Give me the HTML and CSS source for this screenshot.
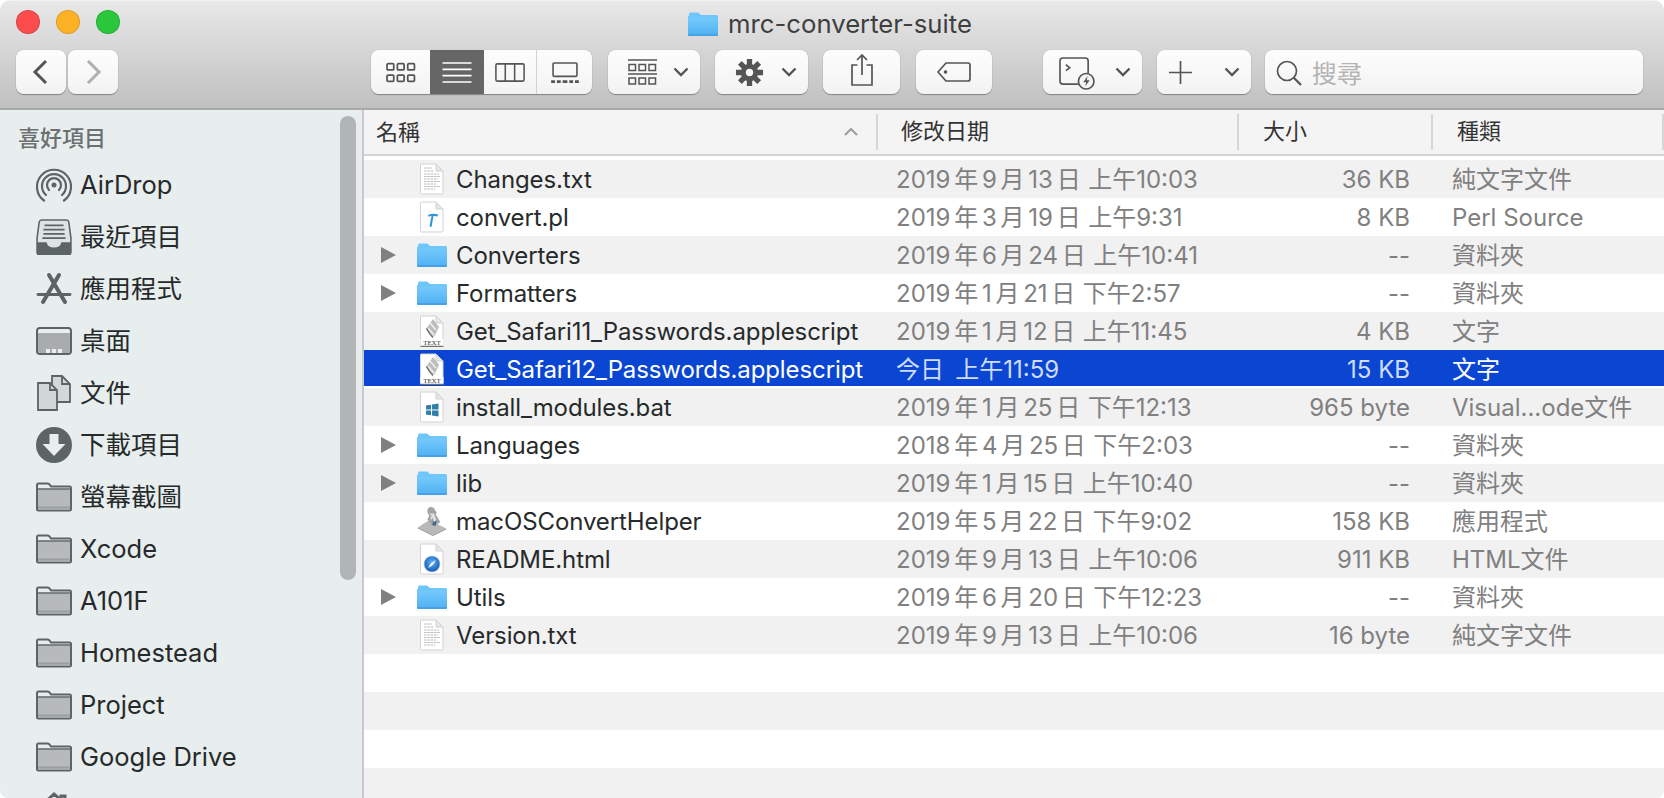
FILE: index.html
```html
<!DOCTYPE html>
<html>
<head>
    <title>mrc-converter-suite</title>
    <link rel="stylesheet" href="styles.css">
</head>
<body>
    <svg class="defs" width="0" height="0">
        <defs>
            <linearGradient id="blueFold" x1="0" y1="0" x2="0" y2="1">
                <stop offset="0" stop-color="#74c9fc"/>
                <stop offset="1" stop-color="#4fb0f3"/>
            </linearGradient>
            <radialGradient id="compass" cx="0.5" cy="0.4" r="0.6">
                <stop offset="0" stop-color="#5ab4f2"/>
                <stop offset="1" stop-color="#1458b8"/>
            </radialGradient>
        </defs>
        <!-- file list icons -->
        <symbol id="i-folder" viewBox="0 0 30 24">
            <path d="M1 4V2q0-1.500 1.500-1.500h7q1 0 2 1L13 3h15.500q1.500 0 1.500 1.500V22q0 2-2 2H2q-2 0-2-2V4z" fill="#6fc6fb"/>
            <path d="M0 6h30v16q0 2-2 2H2q-2 0-2-2z" fill="url(#blueFold)"/>
            <path d="M0 23h30" stroke="#3b92d4" stroke-width="1"/>
        </symbol>
        <symbol id="i-page" viewBox="0 0 24 32">
            <path d="M1.500 1H16l7 7v21.500q0 1.500-1.500 1.500h-20Q.5 31 .5 29.500V2Q.5 1 1.500 1z" fill="#fff" stroke="#d2d2d2"/>
            <path d="M16 1v7h7z" fill="#e6e6e6" stroke="#d2d2d2" stroke-linejoin="round"/>
        </symbol>
        <symbol id="i-txt" viewBox="0 0 24 32">
            <use href="#i-page"/>
            <path d="M4 5h8M4 8h10M4 11h15M4 13.500h16M4 16h14M4 18.500h16M4 21h13M4 23.500h16M4 26h11" stroke="#a8a8a8" stroke-width=".8" stroke-dasharray="2.500 .8"/>
        </symbol>
        <symbol id="i-perl" viewBox="0 0 24 32">
            <use href="#i-page"/>
            <path d="M8 14q5-2 10-.5l-.3 2q-2.500-.8-4.200-.5L11.500 26l-2-.5L11.500 15q-1.500 0-3 .8z" fill="#2a96dc"/>
        </symbol>
        <symbol id="i-script" viewBox="0 0 24 32">
            <use href="#i-page"/>
            <path d="M13 4l6 8-5 10-8-8z" fill="#bdbdbd"/>
            <path d="M10 8l6 7M8 13l6 7" stroke="#efefef" stroke-width="1.500"/>
            <path d="M6.500 13.500q2.500 5 6.500 9" stroke="#6b6b6b" stroke-width="1.400" fill="none"/>
            <rect x="0.500" y="24" width="23" height="7.500" fill="#fff"/>
            <path d="M.5 31.300h23" stroke="#555" stroke-width="1"/>
        </symbol>
        <symbol id="i-bat" viewBox="0 0 24 32">
            <use href="#i-page"/>
            <path d="M6 14.500l5-.8v4.800H6zM12 13.500l6.500-1v6H12zM6 19.500h5v4.800l-5-.8zM12 19.500h6.500v6l-6.500-1z" fill="#2f7fa8"/>
        </symbol>
        <symbol id="i-html" viewBox="0 0 24 32">
            <use href="#i-page"/>
            <circle cx="12" cy="21" r="8" fill="url(#compass)" stroke="#c8d4e4" stroke-width=".6"/>
            <path d="M16 17l-5 3 2 2z" fill="#f4f4f4"/>
            <path d="M8 25l3-5 2 2z" fill="#fff"/>
        </symbol>
        <symbol id="i-app" viewBox="0 0 32 32">
            <path d="M1 23L13 15l18 9-14 7z" fill="#b9b9b9"/>
            <path d="M1 23l16 8v1L1 24zM17 31l14-7v1l-14 7z" fill="#8d8d8d"/>
            <path d="M11 6q0-5 4-5 3 0 4 3l2 3-1 2 5 8-7 5-7-8 2-3z" fill="#a4a4a4"/>
            <path d="M13 8l5 0 3 8-3 3-4-7 2-1z" fill="#e2e2e2"/>
            <path d="M16 12l2 5 3-2-1 6-5-1 2-1z" fill="#47668e"/>
        </symbol>
        <!-- sidebar icons -->
        <symbol id="s-folder" viewBox="0 0 36 30">
            <path d="M1 7V3q0-1.500 1.500-1.500h9q1 0 2 1L15 4.500h18.500q1.500 0 1.500 1.500v21q0 1.500-1.500 1.500h-31Q1 28.500 1 27z" fill="#e8eded" stroke="#5d6466" stroke-width="2"/>
            <path d="M2 7.500h32V27H2z" fill="#b7babc"/>
            <path d="M1 7h34" stroke="#5d6466" stroke-width="1.500"/>
            <path d="M2 25.500h32" stroke="#9a9d9f" stroke-width="2"/>
        </symbol>
        <symbol id="s-airdrop" viewBox="0 0 36 36">
            <g fill="none" stroke="#5d6466" stroke-width="2.200" stroke-linecap="round">
                <path d="M8 33.500a17 17 0 1 1 20 0"/>
                <path d="M10 28a12 12 0 1 1 16 0"/>
                <path d="M13 23a7 7 0 1 1 10 0"/>
            </g>
            <circle cx="18" cy="18" r="2.500" fill="#5d6466"/>
        </symbol>
        <symbol id="s-recents" viewBox="0 0 34 34">
            <path d="M5 1h24q1.500 0 2 2l2 15v13q0 3-3 3H4q-3 0-3-3V18L3 3q.5-2 2-2z" fill="#dfe3e3" stroke="#5d6466" stroke-width="1.500"/>
            <path d="M8 6h18M7 10h20M7 14h20M6 18h22" stroke="#5d6466" stroke-width="1.600"/>
            <path d="M1 22h9q1 5 7 5t7-5h9v9q0 3-3 3H4q-3 0-3-3z" fill="#5d6466"/>
        </symbol>
        <symbol id="s-apps" viewBox="0 0 36 32">
            <g stroke="#5d6466" stroke-linecap="round" fill="none">
                <path d="M13 2l16 27" stroke-width="4"/>
                <path d="M23 2L7 29" stroke-width="4"/>
                <path d="M2 21.500h32" stroke-width="2.800"/>
            </g>
        </symbol>
        <symbol id="s-desktop" viewBox="0 0 36 28">
            <rect x="1" y="1" width="34" height="26" rx="3" fill="#e8eded" stroke="#5d6466" stroke-width="2"/>
            <path d="M2 6h32v18q0 2-2 2H4q-2 0-2-2z" fill="#a9acae"/>
            <path d="M10 22h4v4h-4zM16 22h4v4h-4zM22 22h4v4h-4z" fill="#e8eded"/>
        </symbol>
        <symbol id="s-docs" viewBox="0 0 34 36">
            <path d="M15 1h10l8 8v18H15z" fill="#d3d7d8" stroke="#5d6466" stroke-width="1.800"/>
            <path d="M25 1v8h8" fill="none" stroke="#5d6466" stroke-width="1.800"/>
            <path d="M1 8h12l7 7v20H1z" fill="#d3d7d8" stroke="#5d6466" stroke-width="1.800"/>
            <path d="M13 8v7h7" fill="none" stroke="#5d6466" stroke-width="1.800"/>
        </symbol>
        <symbol id="s-down" viewBox="0 0 36 36">
            <circle cx="18" cy="18" r="18" fill="#5d6466"/>
            <path d="M13.500 7h9v10h7L18 29 6.500 17h7z" fill="#e8eded"/>
        </symbol>
        <symbol id="s-home" viewBox="0 0 36 36">
            <path d="M3 17L18 3l7 6V5h4v8l4 4" fill="none" stroke="#5d6466" stroke-width="3"/>
        </symbol>
    </svg>

    <div class="window">
        <div class="toolbar">
            <div class="titlebar">
                <div class="lights">
                    <span class="light red"></span>
                    <span class="light yellow"></span>
                    <span class="light green"></span>
                </div>
                <div class="title">
                    <svg class="title-icon"><use href="#i-folder"/></svg>
                    <span>mrc-converter-suite</span>
                </div>
            </div>
            <div class="tools">
                <div class="btn nav">
                    <svg viewBox="0 0 50 44"><path d="M30 11L19 22l11 11" class="ico" stroke-width="3"/></svg>
                </div>
                <div class="btn nav off">
                    <svg viewBox="0 0 50 44"><path d="M20 11l11 11-11 11" class="ico" stroke-width="3"/></svg>
                </div>
                <div class="seg">
                    <div class="seg-item first">
                        <svg viewBox="0 0 29 19"><g class="ico" stroke-width="1.700"><rect x="1" y="1" width="6.500" height="6" rx="1"/><rect x="11" y="1" width="6.500" height="6" rx="1"/><rect x="21" y="1" width="6.500" height="6" rx="1"/><rect x="1" y="12" width="6.500" height="6" rx="1"/><rect x="11" y="12" width="6.500" height="6" rx="1"/><rect x="21" y="12" width="6.500" height="6" rx="1"/></g></svg>
                    </div>
                    <div class="seg-item active">
                        <svg viewBox="0 0 29 21"><path d="M0 1h29M0 7.300h29M0 13.600h29M0 20h29" stroke="#fff" stroke-width="1.700"/></svg>
                    </div>
                    <div class="seg-item">
                        <svg viewBox="0 0 33 21"><g class="ico" stroke-width="1.700"><rect x="1" y="1" width="31" height="19" rx="1.500"/><path d="M11.300 1v19M21.600 1v19"/></g></svg>
                    </div>
                    <div class="seg-item last">
                        <svg viewBox="0 0 31 22"><g class="ico" stroke-width="1.700"><rect x="3" y="1" width="25" height="14" rx="1"/></g><path d="M1 19h4v3H1zM7 19h4v3H7zM13 19h5v3h-5zM20 19h4v3h-4zM26 19h4v3h-4z" fill="#555"/></svg>
                    </div>
                </div>
                <div class="btn drop arrange">
                    <svg class="ic-arrange" viewBox="0 0 29 27"><path d="M0 1h29M0 15h29" stroke="#555" stroke-width="1.700"/><g class="ico" stroke-width="1.500"><rect x="1" y="5.500" width="6.500" height="6"/><rect x="11" y="5.500" width="6.500" height="6"/><rect x="21" y="5.500" width="6.500" height="6"/><rect x="1" y="19" width="6.500" height="6"/><rect x="11" y="19" width="6.500" height="6"/><rect x="21" y="19" width="6.500" height="6"/></g></svg>
                    <svg class="chev" viewBox="0 0 16 10"><path d="M1.500 1.500L8 8l6.500-6.500" class="ico" stroke-width="2.400"/></svg>
                </div>
                <div class="btn drop action">
                    <svg class="ic-gear" viewBox="0 0 30 30"><g stroke="#555" stroke-width="5.500"><path d="M15 1v28M1 15h28M5 5l20 20M25 5L5 25"/></g><circle cx="15" cy="15" r="9" fill="#555"/><circle cx="15" cy="15" r="3.800" fill="#f6f6f6"/></svg>
                    <svg class="chev" viewBox="0 0 16 10"><path d="M1.500 1.500L8 8l6.500-6.500" class="ico" stroke-width="2.400"/></svg>
                </div>
                <div class="btn share">
                    <svg viewBox="0 0 22 32"><path d="M6.500 11H1v20h20V11h-5.500M11 21V1.500M6 6l5-5 5 5" class="ico" stroke-width="1.700"/></svg>
                </div>
                <div class="btn tag">
                    <svg viewBox="0 0 34 20"><path d="M9 1h22q2 0 2 2v14q0 2-2 2H9L1 10z" class="ico" stroke-width="1.700" stroke-linejoin="round"/><circle cx="8.500" cy="10" r="1.800" fill="#555"/></svg>
                </div>
                <div class="btn drop quick">
                    <svg class="ic-quick" viewBox="0 0 38 34"><path d="M21 28H5q-3 0-3-3V4q0-3 3-3h23q3 0 3 3v13" class="ico" stroke-width="1.700"/><path d="M8 8l4 3-4 3" class="ico" stroke-width="1.700"/><circle cx="29" cy="25" r="8" fill="#f5f5f5" stroke="#555" stroke-width="1.700"/><path d="M30.500 19.500l-4.500 6.500h3l-1 4.500 4.500-6.500h-3z" fill="#555"/></svg>
                    <svg class="chev" viewBox="0 0 16 10"><path d="M1.500 1.500L8 8l6.500-6.500" class="ico" stroke-width="2.400"/></svg>
                </div>
                <div class="btn drop add">
                    <svg class="ic-plus" viewBox="0 0 23 23"><path d="M11.500 0v23M0 11.500h23" stroke="#555" stroke-width="1.700"/></svg>
                    <svg class="chev" viewBox="0 0 16 10"><path d="M1.500 1.500L8 8l6.500-6.500" class="ico" stroke-width="2.400"/></svg>
                </div>
                <div class="btn search">
                    <svg viewBox="0 0 26 26"><circle cx="11" cy="11" r="9.500" class="ico" stroke-width="1.700"/><path d="M17.800 17.800L25 25" class="ico" stroke-width="2.200"/></svg>
                    <span>搜尋</span>
                </div>
            </div>
        </div>

        <div class="main">
            <div class="sidebar">
                <div class="thumb"></div>
                <div class="side-head">喜好項目</div>
                <div class="side-item"><svg class="s-ic"><use href="#s-airdrop"/></svg>AirDrop</div>
                <div class="side-item"><svg class="s-ic"><use href="#s-recents"/></svg>最近項目</div>
                <div class="side-item"><svg class="s-ic"><use href="#s-apps"/></svg>應用程式</div>
                <div class="side-item"><svg class="s-ic"><use href="#s-desktop"/></svg>桌面</div>
                <div class="side-item"><svg class="s-ic"><use href="#s-docs"/></svg>文件</div>
                <div class="side-item"><svg class="s-ic"><use href="#s-down"/></svg>下載項目</div>
                <div class="side-item"><svg class="s-ic"><use href="#s-folder"/></svg>螢幕截圖</div>
                <div class="side-item"><svg class="s-ic"><use href="#s-folder"/></svg>Xcode</div>
                <div class="side-item"><svg class="s-ic"><use href="#s-folder"/></svg>A101F</div>
                <div class="side-item"><svg class="s-ic"><use href="#s-folder"/></svg>Homestead</div>
                <div class="side-item"><svg class="s-ic"><use href="#s-folder"/></svg>Project</div>
                <div class="side-item"><svg class="s-ic"><use href="#s-folder"/></svg>Google Drive</div>
                <div class="side-item"><svg class="s-ic"><use href="#s-home"/></svg></div>
            </div>

            <div class="content">
                <div class="head">
                    <div class="col-name hcell">名稱<svg class="sort" viewBox="0 0 14 8"><path d="M1 7l6-6 6 6" fill="none" stroke="#9a9a9a" stroke-width="2"/></svg></div>
                    <div class="col-date hcell">修改日期</div>
                    <div class="col-size hcell">大小</div>
                    <div class="col-kind hcell">種類</div>
                </div>
                <div class="rows">
                    <div class="row"><div class="col-name"><svg class="f-ic"><use href="#i-txt"/></svg>Changes.txt</div><div class="col-date">2019 年 9 月 13 日&nbsp; 上午10:03</div><div class="col-size">36 KB</div><div class="col-kind">純文字文件</div></div>
                    <div class="row"><div class="col-name"><svg class="f-ic"><use href="#i-perl"/></svg>convert.pl</div><div class="col-date">2019 年 3 月 19 日&nbsp; 上午9:31</div><div class="col-size">8 KB</div><div class="col-kind">Perl Source</div></div>
                    <div class="row"><div class="col-name"><span class="tri"></span><svg class="f-ic dir"><use href="#i-folder"/></svg>Converters</div><div class="col-date">2019 年 6 月 24 日&nbsp; 上午10:41</div><div class="col-size">--</div><div class="col-kind">資料夾</div></div>
                    <div class="row"><div class="col-name"><span class="tri"></span><svg class="f-ic dir"><use href="#i-folder"/></svg>Formatters</div><div class="col-date">2019 年 1 月 21 日&nbsp; 下午2:57</div><div class="col-size">--</div><div class="col-kind">資料夾</div></div>
                    <div class="row"><div class="col-name"><svg class="f-ic" viewBox="0 0 24 32"><use href="#i-script"/><text x="12" y="30" class="icon-text" text-anchor="middle">TEXT</text></svg>Get_Safari11_Passwords.applescript</div><div class="col-date">2019 年 1 月 12 日&nbsp; 上午11:45</div><div class="col-size">4 KB</div><div class="col-kind">文字</div></div>
                    <div class="row selected"><div class="col-name"><svg class="f-ic" viewBox="0 0 24 32"><use href="#i-script"/><text x="12" y="30" class="icon-text" text-anchor="middle">TEXT</text></svg>Get_Safari12_Passwords.applescript</div><div class="col-date">今日&nbsp;&nbsp; 上午11:59</div><div class="col-size">15 KB</div><div class="col-kind">文字</div></div>
                    <div class="row"><div class="col-name"><svg class="f-ic"><use href="#i-bat"/></svg>install_modules.bat</div><div class="col-date">2019 年 1 月 25 日&nbsp; 下午12:13</div><div class="col-size">965 byte</div><div class="col-kind">Visual...ode文件</div></div>
                    <div class="row"><div class="col-name"><span class="tri"></span><svg class="f-ic dir"><use href="#i-folder"/></svg>Languages</div><div class="col-date">2018 年 4 月 25 日&nbsp; 下午2:03</div><div class="col-size">--</div><div class="col-kind">資料夾</div></div>
                    <div class="row"><div class="col-name"><span class="tri"></span><svg class="f-ic dir"><use href="#i-folder"/></svg>lib</div><div class="col-date">2019 年 1 月 15 日&nbsp; 上午10:40</div><div class="col-size">--</div><div class="col-kind">資料夾</div></div>
                    <div class="row"><div class="col-name"><svg class="f-ic dir"><use href="#i-app"/></svg>macOSConvertHelper</div><div class="col-date">2019 年 5 月 22 日&nbsp; 下午9:02</div><div class="col-size">158 KB</div><div class="col-kind">應用程式</div></div>
                    <div class="row"><div class="col-name"><svg class="f-ic"><use href="#i-html"/></svg>README.html</div><div class="col-date">2019 年 9 月 13 日&nbsp; 上午10:06</div><div class="col-size">911 KB</div><div class="col-kind">HTML文件</div></div>
                    <div class="row"><div class="col-name"><span class="tri"></span><svg class="f-ic dir"><use href="#i-folder"/></svg>Utils</div><div class="col-date">2019 年 6 月 20 日&nbsp; 下午12:23</div><div class="col-size">--</div><div class="col-kind">資料夾</div></div>
                    <div class="row"><div class="col-name"><svg class="f-ic"><use href="#i-txt"/></svg>Version.txt</div><div class="col-date">2019 年 9 月 13 日&nbsp; 上午10:06</div><div class="col-size">16 byte</div><div class="col-kind">純文字文件</div></div>
                    <div class="row"></div>
                    <div class="row"></div>
                    <div class="row"></div>
                    <div class="row"></div>
                </div>
            </div>
        </div>
    </div>
</body>
</html>
```

FILE: styles.css
```css
:root {
    --ink: #262a2b;
    --gray: #808080;
    --icon: #555;
    --stripe: #f1f1f1;
    --line: #d6d6d6;
    --side: #e8eded;
    --select: #0a46d2;
}

* {
    box-sizing: border-box;
}

html, body {
    margin: 0;
    height: 100%;
    background: white;
    overflow: hidden;
}

body {
    font-family: 'Inter', 'Noto Sans CJK TC', sans-serif;
    color: var(--ink);
}

.defs {
    position: absolute;
}

.icon-text {
    font-family: 'Liberation Serif', serif;
    font-size: 7px;
    fill: #333;
}

.ico {
    fill: none;
    stroke: var(--icon);
}

.window {
    height: 798px;
    display: flex;
    flex-direction: column;
    border-radius: 10px 10px 8px 8px;
    overflow: hidden;
}

/* toolbar */
.toolbar {
    height: 110px;
    flex-shrink: 0;
    background: linear-gradient(#e8e8e8, #c0c0c0);
    border-top: 1px solid #f2f2f2;
    border-bottom: 2px solid #a9a9a9;
}

.titlebar {
    height: 49px;
    position: relative;
    display: flex;
    align-items: center;
    justify-content: center;
}

.lights {
    position: absolute;
    left: 16px;
    top: 9px;
    display: flex;
    gap: 16px;
}

.light {
    width: 24px;
    height: 24px;
    border-radius: 50%;
    border: 1px solid rgba(0, 0, 0, 0.12);
}

.red { background: #fc4c4d; }
.yellow { background: #fdb225; }
.green { background: #2ac73c; }

.title {
    display: flex;
    align-items: center;
    gap: 10px;
    font-size: 25.7px;
    color: #3f3f3f;
    margin-left: -4px;
    margin-top: -4px;
}

.title-icon {
    width: 30px;
    height: 24px;
}

.tools {
    display: flex;
    height: 44px;
    padding-left: 16px;
}

.btn, .seg {
    background: linear-gradient(#fdfdfd, #f3f3f3);
    border-radius: 8px;
    box-shadow: 0 1px 1px rgba(0, 0, 0, 0.32), 0 0 1px rgba(0, 0, 0, 0.2);
    height: 44px;
    display: flex;
    align-items: center;
    justify-content: center;
    flex-shrink: 0;
}

.nav {
    width: 50px;
    margin-right: 2px;
}

.nav svg {
    width: 50px;
    height: 44px;
}

.nav.off .ico {
    stroke: #b0b0b0;
}

.nav.off {
    margin-right: 253px;
}

.seg {
    width: 221px;
    margin-right: 16px;
    overflow: hidden;
}

.seg-item {
    height: 44px;
    width: 53px;
    display: flex;
    align-items: center;
    justify-content: center;
    border-right: 1px solid #d2d2d2;
}

.seg-item svg {
    width: 30px;
    height: 21px;
}

.seg-item.first { width: 59px; border-right: 0; }
.seg-item.active { width: 54px; background: #666; border-right: 0; height: 46px; }
.seg-item.last { width: 55px; border-right: 0; }

.drop {
    justify-content: flex-start;
    padding-left: 20px;
}

.chev {
    width: 16px;
    height: 10px;
    margin-left: auto;
    margin-right: 11px;
}

.arrange { width: 92px; margin-right: 15px; }
.action { width: 93px; margin-right: 15px; }
.share { width: 77px; margin-right: 16px; }
.tag { width: 76px; margin-right: 51px; }
.quick { width: 99px; margin-right: 15px; padding-left: 15px; }
.add { width: 94px; margin-right: 14px; padding-left: 12px; }

.ic-arrange { width: 29px; height: 27px; }
.ic-gear { width: 29px; height: 29px; }
.ic-quick { width: 37px; height: 33px; margin-top: 3px; }
.ic-plus { width: 23px; height: 23px; }
.share svg { width: 22px; height: 32px; margin-top: -4px; }
.tag svg { width: 34px; height: 20px; }

.search {
    width: 378px;
    justify-content: flex-start;
    padding-left: 11px;
    gap: 10px;
    font-size: 25px;
    color: #b4b4b4;
}

.search svg {
    width: 26px;
    height: 26px;
    margin-top: 2px;
}

/* sidebar */
.main {
    flex: 1;
    display: flex;
    min-height: 0;
}

.sidebar {
    width: 364px;
    flex-shrink: 0;
    background: var(--side);
    border-right: 2px solid #c6caca;
    position: relative;
    overflow: hidden;
}

.thumb {
    position: absolute;
    left: 340px;
    top: 6px;
    width: 16px;
    height: 464px;
    background: #b2b5b6;
    border-radius: 8px;
}

.side-head {
    font-size: 22px;
    line-height: 30px;
    color: #6b7072;
    font-weight: 500;
    padding: 13px 0 0 18px;
    height: 49px;
}

.side-item {
    height: 52px;
    display: flex;
    align-items: center;
    font-size: 25.5px;
    line-height: 30px;
    padding-left: 36px;
    gap: 8px;
    color: var(--ink);
}

.s-ic {
    width: 36px;
    height: 36px;
}

/* list */
.content {
    flex: 1;
    min-width: 0;
    background: white;
}

.head {
    height: 46px;
    display: flex;
    background: #f4f4f4;
    border-bottom: 2px solid #d4d4d4;
    margin-bottom: 4px;
    align-items: center;
}

.hcell {
    font-size: 22px;
    color: #333;
    height: 36px;
    line-height: 34px;
    position: relative;
    border-right: 2px solid var(--line);
}

.sort {
    position: absolute;
    right: 18px;
    top: 14px;
    width: 14px;
    height: 8px;
}

.col-name {
    width: 513px;
    flex-shrink: 0;
    padding-left: 92px;
    position: relative;
    display: flex;
    align-items: center;
    letter-spacing: -0.1px;
}

.head .col-name { width: 514px; padding-left: 12px; }

.col-date {
    width: 361px;
    flex-shrink: 0;
    padding-left: 19px;
    word-spacing: -3px;
}

.head .col-date { padding-left: 23px; }

.col-size {
    width: 192px;
    flex-shrink: 0;
    padding-right: 20px;
    text-align: right;
}

.head .col-size {
    width: 194px;
    padding: 0 0 0 24px;
    text-align: left;
}

.col-kind {
    flex: 1;
    padding-left: 22px;
    white-space: nowrap;
}

.head .col-kind { padding-left: 24px; }

.rows {
    height: 640px;
    overflow: hidden;
}

.row {
    height: 38px;
    padding-top: 2px;
    display: flex;
    align-items: center;
    font-size: 24px;
    line-height: 30px;
}

.row:nth-child(odd) {
    background: var(--stripe);
}

.row > .col-date, .row > .col-size, .row > .col-kind {
    color: var(--gray);
}

.row.selected {
    background: linear-gradient(var(--select) 36px, white 36px);
    color: white;
}

.row.selected > .col-date, .row.selected > .col-size {
    color: #cfdcfb;
}

.row.selected > .col-kind {
    color: white;
}

.tri {
    position: absolute;
    left: 17px;
    width: 0;
    height: 0;
    margin-top: -2px;
    border-left: 15px solid #808080;
    border-top: 8px solid transparent;
    border-bottom: 8px solid transparent;
}

.f-ic {
    position: absolute;
    left: 56px;
    width: 24px;
    height: 32px;
    margin-top: -2px;
}

.f-ic.dir {
    left: 53px;
    width: 30px;
}
```
